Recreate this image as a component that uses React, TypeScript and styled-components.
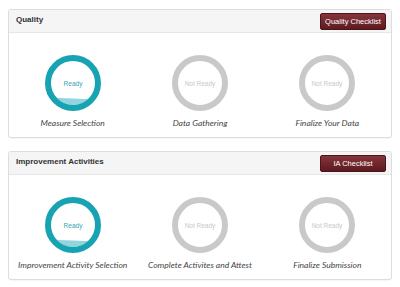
import React from "react";
import styled, { createGlobalStyle } from "styled-components";

const GlobalStyle = createGlobalStyle`
  html, body {
    margin: 0;
    padding: 0;
    background: #ffffff;
  }
`;

const Page = styled.div`
  display: flex;
  flex-direction: column;
  gap: 13px;
  padding: 9px 8px 5px;
  font-family: "Liberation Sans", Arial, sans-serif;
`;

const Panel = styled.section`
  border: 1px solid #dddddd;
  border-radius: 3px;
  background: #ffffff;
  box-shadow: 0 1px 1px rgba(0, 0, 0, 0.04);
  overflow: hidden;
`;

const PanelHeader = styled.header`
  display: flex;
  align-items: center;
  justify-content: space-between;
  height: 22px;
  padding: 0 5px 0 7px;
  background: #f5f5f5;
  border-bottom: 1px solid #e6e6e6;
`;

const PanelTitle = styled.h3`
  margin: 0 0 4px;
  font-size: 8px;
  font-weight: 700;
  color: #333333;
`;

const ChecklistButton = styled.button`
  width: 66px;
  height: 17px;
  padding: 0;
  border: 1px solid #4f1418;
  border-radius: 2px;
  background: linear-gradient(#86343a, #5c1b20);
  color: #ffffff;
  font-family: "Liberation Sans", Arial, sans-serif;
  font-size: 7.5px;
  cursor: pointer;
`;

const Steps = styled.div`
  display: grid;
  grid-template-columns: repeat(3, 1fr);
  padding: 22px 0 8px;
`;

const Step = styled.div`
  display: flex;
  flex-direction: column;
  align-items: center;
  gap: 6px;
`;

const StepLabel = styled.span`
  font-family: Lato, "Open Sans", sans-serif;
  font-style: italic;
  font-size: 8.5px;
  line-height: 12px;
  color: #444444;
  white-space: nowrap;
`;

type StepData = { label: string; ready: boolean };

function StatusRing({ ready, id }: { ready: boolean; id: string }) {
  const ring = ready ? "#17a3b2" : "#c9c9c9";
  return (
    <svg width="56" height="56" viewBox="0 0 56 56">
      <defs>
        <clipPath id={id}>
          <circle cx="28" cy="28" r="22" />
        </clipPath>
      </defs>
      {ready && (
        <path
          d="M0 43.5 Q14 42.5 28 43.5 T56 43 V56 H0 Z"
          fill="#93d5de"
          clipPath={`url(#${id})`}
        />
      )}
      <circle cx="28" cy="28" r="25" fill="none" stroke={ring} strokeWidth="6" />
      <text
        x="28"
        y="30.5"
        textAnchor="middle"
        fontFamily="'Liberation Sans', Arial, sans-serif"
        fontSize="6.5"
        fill={ready ? "#3a9fb0" : "#c8c8c8"}
      >
        {ready ? "Ready" : "Not Ready"}
      </text>
    </svg>
  );
}

function StatusPanel({
  title,
  button,
  steps,
  prefix,
}: {
  title: string;
  button: string;
  steps: StepData[];
  prefix: string;
}) {
  return (
    <Panel>
      <PanelHeader>
        <PanelTitle>{title}</PanelTitle>
        <ChecklistButton>{button}</ChecklistButton>
      </PanelHeader>
      <Steps>
        {steps.map((s, i) => (
          <Step key={s.label}>
            <StatusRing ready={s.ready} id={`${prefix}-${i}`} />
            <StepLabel>{s.label}</StepLabel>
          </Step>
        ))}
      </Steps>
    </Panel>
  );
}

export default function App() {
  return (
    <Page>
      <GlobalStyle />
      <StatusPanel
        title="Quality"
        button="Quality Checklist"
        prefix="q"
        steps={[
          { label: "Measure Selection", ready: true },
          { label: "Data Gathering", ready: false },
          { label: "Finalize Your Data", ready: false },
        ]}
      />
      <StatusPanel
        title="Improvement Activities"
        button="IA Checklist"
        prefix="ia"
        steps={[
          { label: "Improvement Activity Selection", ready: true },
          { label: "Complete Activites and Attest", ready: false },
          { label: "Finalize Submission", ready: false },
        ]}
      />
    </Page>
  );
}
